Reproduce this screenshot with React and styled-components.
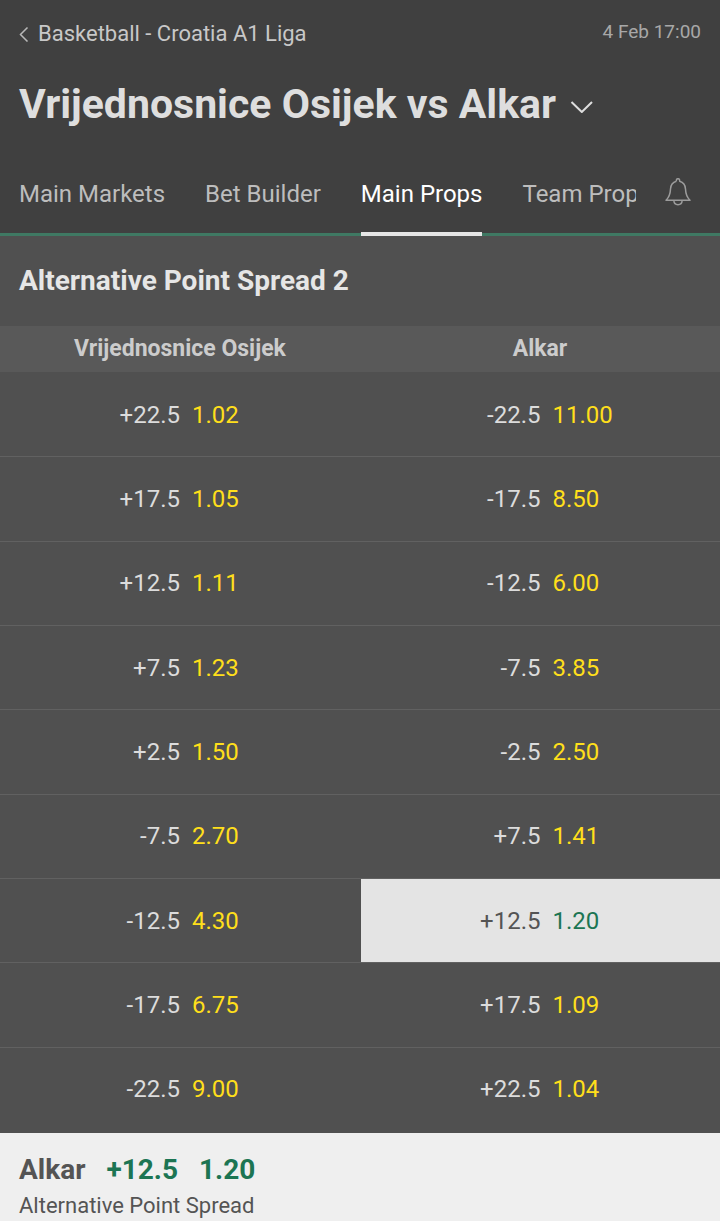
import React, { useState } from "react";
import styled, { createGlobalStyle } from "styled-components";

const GlobalStyle = createGlobalStyle`
  * { box-sizing: border-box; }
  body {
    margin: 0;
    background: #505050;
    font-family: Roboto, "Liberation Sans", sans-serif;
  }
  button {
    padding: 0;
    border: 0;
    background: none;
    color: inherit;
    font: inherit;
    cursor: pointer;
  }
`;

const Page = styled.div`
  display: flex;
  flex-direction: column;
  min-height: 100vh;
`;

const Header = styled.header`
  background: #404040;
`;

const TopBar = styled.div`
  display: flex;
  justify-content: space-between;
  align-items: flex-start;
  padding: 18px 19px 0;
`;

const BackLink = styled.a`
  display: flex;
  align-items: center;
  gap: 8px;
  color: #c8c8c8;
  font-size: 22px;
  line-height: 32px;
  text-decoration: none;
`;

const StartTime = styled.time`
  color: #a8a8a8;
  font-size: 19px;
  line-height: 28px;
`;

const TitleRow = styled.div`
  padding: 30px 19px 0;
`;

const TitleButton = styled.button`
  display: flex;
  align-items: center;
  gap: 14px;
`;

const Title = styled.h1`
  margin: 0;
  color: #dedede;
  font-size: 41px;
  font-weight: 700;
  line-height: 48px;
`;

const TabBar = styled.nav`
  display: flex;
  justify-content: space-between;
  margin-top: 28px;
  border-bottom: 3px solid #3f7963;
`;

const Tabs = styled.div`
  display: flex;
  flex: 1;
  gap: 40px;
  min-width: 0;
  margin-bottom: -3px;
  padding-left: 19px;
  overflow: hidden;
`;

const Tab = styled.button`
  flex: none;
  height: 80px;
  border-bottom: 4px solid ${(p) => (p.$active ? "#e6e6e6" : "transparent")};
  color: ${(p) => (p.$active ? "#ffffff" : "#bdbdbd")};
  font-size: 24px;
  line-height: 76px;
  white-space: nowrap;
`;

const AlertButton = styled.button`
  display: flex;
  flex: none;
  align-items: center;
  justify-content: center;
  width: 84px;
  height: 72px;
`;

const Market = styled.main`
  display: flex;
  flex: 1;
  flex-direction: column;
  padding-bottom: 2px;
`;

const MarketTitle = styled.h2`
  margin: 0;
  padding: 0 19px;
  color: #e6e6e6;
  font-size: 28px;
  font-weight: 700;
  line-height: 90px;
`;

const OddsTable = styled.table`
  display: grid;
  flex: 1;
  grid-template-rows: 46px;
  grid-auto-rows: 1fr;

  thead, tbody { display: contents; }
`;

const Row = styled.tr`
  display: grid;
  grid-template-columns: 1fr 1fr;
`;

const TeamCell = styled.th`
  padding: 0;
  background: #595959;
  color: #cccccc;
  font-size: 23px;
  font-weight: 700;
  line-height: 46px;
`;

const OddsCell = styled.td`
  display: flex;
  min-height: 80px;
  padding: 0;
  border-top: 1px solid ${(p) => (p.$first ? "transparent" : "#616161")};

  & + & { padding-left: 1px; }
`;

const OddsButton = styled.button`
  display: grid;
  flex: 1;
  grid-template-columns: 1fr 1fr;
  align-items: center;
  column-gap: 12px;
  padding-left: 12px;
  background: ${(p) => (p.$selected ? "#e4e4e4" : "transparent")};
  color: ${(p) => (p.$selected ? "#545454" : "#dcdcdc")};
  font-size: 24px;
  line-height: 28px;
`;

const Handicap = styled.span`
  text-align: right;
`;

const Odds = styled.span`
  color: ${(p) => (p.$selected ? "#1c7553" : "#ffdf1b")};
  text-align: left;
`;

const BetSlip = styled.footer`
  position: sticky;
  bottom: 0;
  padding: 20px 19px 2px;
  background: #efefef;
  color: #545454;
`;

const Selection = styled.div`
  display: flex;
  gap: 21px;
  font-size: 28px;
  font-weight: 700;
  line-height: 34px;
`;

const SlipValue = styled.span`
  color: #1c7553;
`;

const SlipMarket = styled.div`
  margin-top: 6px;
  font-size: 22px;
  line-height: 26px;
`;

const TABS = ["Main Markets", "Bet Builder", "Main Props", "Team Props"];
const TEAMS = ["Vrijednosnice Osijek", "Alkar"];
const LINES = [
  [["+22.5", "1.02"], ["-22.5", "11.00"]],
  [["+17.5", "1.05"], ["-17.5", "8.50"]],
  [["+12.5", "1.11"], ["-12.5", "6.00"]],
  [["+7.5", "1.23"], ["-7.5", "3.85"]],
  [["+2.5", "1.50"], ["-2.5", "2.50"]],
  [["-7.5", "2.70"], ["+7.5", "1.41"]],
  [["-12.5", "4.30"], ["+12.5", "1.20"]],
  [["-17.5", "6.75"], ["+17.5", "1.09"]],
  [["-22.5", "9.00"], ["+22.5", "1.04"]],
];

function BackIcon() {
  return (
    <svg width="11" height="16" viewBox="0 0 11 16" fill="none" stroke="#b8b8b8" strokeWidth="1.5" aria-hidden="true">
      <path d="M8.500 1.500 1.500 8.500 8.500 15.500" />
    </svg>
  );
}

function ChevronIcon() {
  return (
    <svg width="24" height="18" viewBox="0 0 24 18" fill="none" stroke="#dedede" strokeWidth="2" aria-hidden="true">
      <path d="M1.500 7 11.800 17 22 7" />
    </svg>
  );
}

function BellIcon() {
  return (
    <svg width="26" height="28" viewBox="0 0 26 28" fill="none" stroke="#9c9c9c" strokeWidth="1.500" strokeLinejoin="round" aria-hidden="true">
      <path d="M11.300 3.300V2.400a1.700 1.700 0 0 1 3.400 0v.9C18.600 4.400 20.300 7.200 20.500 11c.2 5.200 1 8 4.500 11.200H1C4.500 19 5.300 16.200 5.500 11 5.700 7.200 7.400 4.400 11.300 3.300" />
      <path d="M8.800 22.300c.2 2.900 1.900 4.500 4.200 4.500s4-1.600 4.200-4.500" />
    </svg>
  );
}

export default function App() {
  const [activeTab, setActiveTab] = useState("Main Props");
  const [selected, setSelected] = useState({ row: 6, team: 1 });
  const [line, price] = LINES[selected.row][selected.team];

  return (
    <Page>
      <GlobalStyle />
      <Header>
        <TopBar>
          <BackLink href="#basketball">
            <BackIcon />
            Basketball - Croatia A1 Liga
          </BackLink>
          <StartTime>4 Feb 17:00</StartTime>
        </TopBar>
        <TitleRow>
          <TitleButton>
            <Title>Vrijednosnice Osijek vs Alkar</Title>
            <ChevronIcon />
          </TitleButton>
        </TitleRow>
        <TabBar>
          <Tabs>
            {TABS.map((tab) => (
              <Tab key={tab} $active={tab === activeTab} onClick={() => setActiveTab(tab)}>
                {tab}
              </Tab>
            ))}
          </Tabs>
          <AlertButton aria-label="Match alerts">
            <BellIcon />
          </AlertButton>
        </TabBar>
      </Header>
      <Market>
        <MarketTitle>Alternative Point Spread 2</MarketTitle>
        <OddsTable>
          <thead>
            <Row>
              {TEAMS.map((team) => (
                <TeamCell key={team} scope="col">{team}</TeamCell>
              ))}
            </Row>
          </thead>
          <tbody>
            {LINES.map((cells, row) => (
              <Row key={row}>
                {cells.map(([handicap, odds], team) => {
                  const isSelected = selected.row === row && selected.team === team;
                  return (
                    <OddsCell key={team} $first={row === 0}>
                      <OddsButton
                        $selected={isSelected}
                        aria-pressed={isSelected}
                        onClick={() => setSelected({ row, team })}
                      >
                        <Handicap>{handicap}</Handicap>
                        <Odds $selected={isSelected}>{odds}</Odds>
                      </OddsButton>
                    </OddsCell>
                  );
                })}
              </Row>
            ))}
          </tbody>
        </OddsTable>
      </Market>
      <BetSlip>
        <Selection>
          <span>{TEAMS[selected.team]}</span>
          <SlipValue>{line}</SlipValue>
          <SlipValue>{price}</SlipValue>
        </Selection>
        <SlipMarket>Alternative Point Spread</SlipMarket>
      </BetSlip>
    </Page>
  );
}
